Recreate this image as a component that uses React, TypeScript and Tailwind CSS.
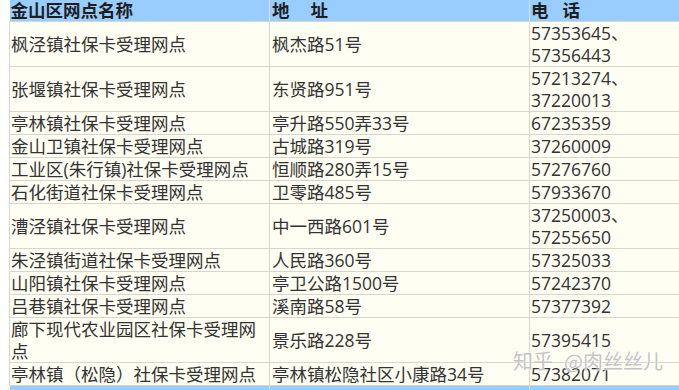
import React from "react";

type Row = { name: string; addr: string; phone: string[] };

const rows: Row[] = [
  { name: "枫泾镇社保卡受理网点", addr: "枫杰路51号", phone: ["57353645、", "57356443"] },
  { name: "张堰镇社保卡受理网点", addr: "东贤路951号", phone: ["57213274、", "37220013"] },
  { name: "亭林镇社保卡受理网点", addr: "亭升路550弄33号", phone: ["67235359"] },
  { name: "金山卫镇社保卡受理网点", addr: "古城路319号", phone: ["37260009"] },
  { name: "工业区(朱行镇)社保卡受理网点", addr: "恒顺路280弄15号", phone: ["57276760"] },
  { name: "石化街道社保卡受理网点", addr: "卫零路485号", phone: ["57933670"] },
  { name: "漕泾镇社保卡受理网点", addr: "中一西路601号", phone: ["37250003、", "57255650"] },
  { name: "朱泾镇街道社保卡受理网点", addr: "人民路360号", phone: ["57325033"] },
  { name: "山阳镇社保卡受理网点", addr: "亭卫公路1500号", phone: ["57242370"] },
  { name: "吕巷镇社保卡受理网点", addr: "溪南路58号", phone: ["57377392"] },
  { name: "廊下现代农业园区社保卡受理网点", addr: "景乐路228号", phone: ["57395415"] },
  { name: "亭林镇（松隐）社保卡受理网点", addr: "亭林镇松隐社区小康路34号", phone: ["57382071"] },
];

const cell =
  "border border-[#d6d6ce] bg-[#fefef2] align-middle text-left font-normal leading-[22px] p-0";

export default function App() {
  return (
    <div
      className="relative w-[679px] h-[390px] overflow-hidden bg-white text-[17.5px] text-[#333]"
      style={{ fontFamily: '"Open Sans", "Noto Sans CJK SC", sans-serif' }}
    >
      <table className="ml-[9px] table-fixed border-collapse w-[690px]">
        <colgroup>
          <col className="w-[260px]" />
          <col className="w-[260px]" />
          <col className="w-[170px]" />
        </colgroup>
        <thead>
          <tr>
            <th className="bg-[#99ccff] border-b border-b-[#d6d6ce] border-r border-r-[#cfe4fa] text-left font-bold text-[#1e1e1e] leading-[21px] p-0 pl-[1px]">
              金山区网点名称
            </th>
            <th className="bg-[#99ccff] border-b border-b-[#d6d6ce] border-r border-r-[#cfe4fa] text-left font-bold text-[#1e1e1e] leading-[21px] p-0 pl-[2px]">
              地<span className="ml-[21px]">址</span>
            </th>
            <th className="bg-[#99ccff] border-b border-b-[#d6d6ce] text-left font-bold text-[#1e1e1e] leading-[21px] p-0 pl-[1px]">
              电<span className="ml-[14px]">话</span>
            </th>
          </tr>
        </thead>
        <tbody>
          {rows.map((r, i) => (
            <tr key={i}>
              <td className={`${cell} pl-[1px]`}>{r.name}</td>
              <td className={`${cell} pl-[2px]`}>{r.addr}</td>
              <td className={`${cell} pl-[1px]`}>
                {r.phone.map((p, j) => (
                  <div key={j}>{p}</div>
                ))}
              </td>
            </tr>
          ))}
          <tr>
            <td className="bg-[#99ccff] border-r border-r-[#cfe4fa] leading-[21px] p-0">&nbsp;</td>
            <td className="bg-[#99ccff] border-r border-r-[#cfe4fa] leading-[21px] p-0">&nbsp;</td>
            <td className="bg-[#99ccff] leading-[21px] p-0">&nbsp;</td>
          </tr>
        </tbody>
      </table>
      <div
        className="absolute left-[513px] top-[349px] text-[20px] leading-[24px] text-[#c4c4c4] whitespace-nowrap"
        style={{ fontFamily: '"Noto Sans CJK SC", sans-serif', textShadow: "0 0 2px #fff, 0 0 1px #fff" }}
      >
        知乎<span className="ml-[11px]">@肉丝丝儿</span>
      </div>
    </div>
  );
}
